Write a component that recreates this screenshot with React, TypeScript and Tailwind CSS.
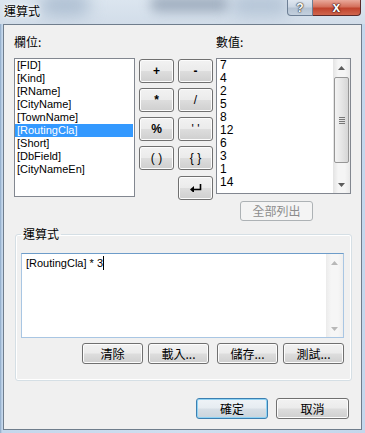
import React from "react";

const cjk = "font-['Noto_Sans_CJK_TC','Noto_Sans_CJK_SC',sans-serif]";
const latin = "font-['Liberation_Sans',Arial,sans-serif]";

const btnBase =
  "flex items-center justify-center rounded-[3px] border border-[#707070] bg-[linear-gradient(#f2f2f2_0%,#ebebeb_48%,#dddddd_52%,#cfcfcf_100%)] shadow-[inset_0_0_0_1px_#fcfcfc] text-black";

function Btn({ className, children }: { className: string; children: React.ReactNode }) {
  return <div className={`${btnBase} ${className}`}>{children}</div>;
}

function EnterIcon() {
  return (
    <svg width="12" height="8" viewBox="0 0 12 8">
      <path d="M10.5 0 V5.5 H3" stroke="#000" strokeWidth="1.6" fill="none" />
      <path d="M0 5.5 L4 2 V9 Z" fill="#000" />
    </svg>
  );
}

function Arrow({ up }: { up?: boolean }) {
  return (
    <svg width="7" height="4" viewBox="0 0 7 4">
      <path d={up ? "M0 4 L3.5 0 L7 4 Z" : "M0 0 L3.5 4 L7 0 Z"} fill="#5c5c5c" />
    </svg>
  );
}

const fields = ["[FID]", "[Kind]", "[RName]", "[CityName]", "[TownName]", "[RoutingCla]", "[Short]", "[DbField]", "[CityNameEn]"];
const values = ["7", "4", "2", "5", "8", "12", "6", "3", "1", "14"];

export default function App() {
  return (
    <div className="relative w-[365px] h-[433px] overflow-hidden bg-[linear-gradient(90deg,#8aa6c4_0px,#c4d7ec_2px,#cfdff0_50%,#c4d7ec_100%)]">
      {/* title bar */}
      <div className="relative h-[24px] flex items-start overflow-hidden bg-[linear-gradient(180deg,#dbe5ef,#d2dde9)]">
        <div className="absolute left-[40px] top-[-6px] w-[50px] h-[22px] rounded-full bg-[#aebfd2] blur-[8px]" />
        <div className="absolute left-[150px] top-[-4px] w-[80px] h-[16px] rounded-full bg-[#8797ab] blur-[6px] opacity-70" />
        <div className="absolute left-[230px] top-[-6px] w-[60px] h-[22px] rounded-full bg-[#b4c4d6] blur-[8px]" />
        <span className={`relative ml-[4px] mt-[3px] text-[12px] leading-[16px] text-black ${cjk} [text-shadow:0_0_6px_#fff,0_0_3px_#fff]`}>運算式</span>
        <div className="relative ml-auto mr-[4px] flex">
          <div className="w-[26px] h-[16px] rounded-bl-[4px] border border-t-0 border-[#6d7f95] bg-[linear-gradient(#dfe7f0_0%,#cbd6e3_45%,#b5c3d3_55%,#c3d0de_100%)] flex items-center justify-center">
            <span className={`text-[12px] leading-[12px] font-bold text-white ${latin} [text-shadow:0_0_1px_#333,0_0_1px_#333,0_0_2px_#333]`}>?</span>
          </div>
          <div className="w-[48px] h-[16px] rounded-br-[4px] border border-t-0 border-l-0 border-[#5a2a2a] bg-[linear-gradient(#e9a99b_0%,#d4705c_45%,#c0432d_55%,#d0664e_100%)] flex items-center justify-center">
            <span className={`text-[14px] leading-[13px] font-bold text-white ${latin} [text-shadow:0_0_1px_#3a1010,0_0_1px_#3a1010,0_0_2px_#3a1010]`}>x</span>
          </div>
        </div>
      </div>

      {/* client area */}
      <div className="ml-[3px] w-[359px] h-[406px] border border-[#6f7d8c] bg-[#f0f0f0] flex flex-col">
        {/* labels */}
        <div className={`flex mt-[9px] text-[12px] leading-[16px] text-black ${cjk}`}>
          <span className="ml-[10px] w-[202px]">欄位:</span>
          <span>數值:</span>
        </div>

        {/* top section */}
        <div className="flex mt-[8px] ml-[10px]">
          <div className={`w-[121px] h-[139px] border border-[#828790] bg-white ${latin} text-[11px] leading-[13px] text-black`}>
            {fields.map((f) => (
              <div
                key={f}
                className={`h-[13px] pl-[2px] ${f === "[RoutingCla]" ? "bg-[#3399ff] text-white mr-[1px]" : ""}`}
              >
                {f}
              </div>
            ))}
          </div>

          <div className={`ml-[4px] mt-[1px] flex flex-col gap-[5px] ${latin} text-[12px] font-bold`}>
            <Btn className="w-[35px] h-[24px]">+</Btn>
            <Btn className="w-[35px] h-[24px]">*</Btn>
            <Btn className="w-[35px] h-[24px]">%</Btn>
            <Btn className="w-[35px] h-[24px] font-normal">( )</Btn>
          </div>
          <div className={`ml-[4px] mt-[1px] flex flex-col gap-[5px] ${latin} text-[12px] font-bold`}>
            <Btn className="w-[35px] h-[24px]">-</Btn>
            <Btn className="w-[35px] h-[24px] font-normal">/</Btn>
            <Btn className="w-[35px] h-[24px] font-normal">' '</Btn>
            <Btn className="w-[35px] h-[24px] font-normal">{"{ }"}</Btn>
            <Btn className="w-[35px] h-[24px] mt-[1px]">
              <EnterIcon />
            </Btn>
          </div>

          <div className="ml-[3px] flex flex-col">
            <div className="w-[135px] h-[136px] border border-[#828790] bg-white flex">
              <div className={`flex-1 pl-[3px] ${latin} text-[12px] leading-[13px] text-black`}>
                {values.map((v) => (
                  <div key={v} className="h-[13px]">{v}</div>
                ))}
              </div>
              <div className="w-[17px] flex flex-col bg-[linear-gradient(90deg,#e3e3e3,#f5f5f5_30%,#f5f5f5_70%,#e9e9e9)]">
                <div className="h-[17px] flex items-center justify-center"><Arrow up /></div>
                <div className="mx-[1px] mt-[1px] h-[86px] rounded-[2px] border border-[#969696] bg-[linear-gradient(90deg,#f3f3f3,#e6e6e6_50%,#d6d6d6)] flex flex-col items-center justify-center gap-[1px]">
                  <div className="w-[6px] h-[1px] bg-[#777]" />
                  <div className="w-[6px] h-[1px] bg-[#777]" />
                  <div className="w-[6px] h-[1px] bg-[#777]" />
                  <div className="w-[6px] h-[1px] bg-[#777]" />
                </div>
                <div className="flex-1" />
                <div className="h-[17px] flex items-center justify-center"><Arrow /></div>
              </div>
            </div>
            <div className={`ml-[24px] mt-[7px] w-[73px] h-[20px] rounded-[3px] border border-[#adb2b5] bg-[#f4f4f4] flex items-center justify-center text-[12px] text-[#8d8d8d] ${cjk}`}>
              全部列出
            </div>
          </div>
        </div>

        {/* expression group */}
        <fieldset className="ml-[11px] mt-[5px] w-[337px] rounded-[3px] border border-[#d5dfe5] pb-[16px] shadow-[inset_0_0_0_1px_#fff]">
          <legend className={`ml-[5px] px-[2px] text-[12px] leading-[16px] text-black ${cjk}`}>運算式</legend>
          <div className="ml-[5px] mt-[11px] w-[323px] h-[85px] border border-[#a9c6e3] border-t-[#6d9cc9] bg-white flex">
            <div className={`flex-1 pl-[4px] pt-[2px] ${latin} text-[11px] leading-[14px] text-black flex items-start`}>
              <span>[RoutingCla] * 3</span>
              <span className="w-[1px] h-[14px] bg-black" />
            </div>
            <div className="w-[17px] flex flex-col justify-between bg-[linear-gradient(90deg,#ebebeb,#f6f6f6_30%,#f6f6f6_70%,#eeeeee)]">
              <div className="h-[17px] flex items-center justify-center opacity-40"><Arrow up /></div>
              <div className="h-[17px] flex items-center justify-center opacity-40"><Arrow /></div>
            </div>
          </div>
          <div className={`mt-[5px] flex text-[12px] ${cjk}`}>
            <Btn className="ml-[66px] w-[61px] h-[21px]">清除</Btn>
            <Btn className="ml-[5px] w-[61px] h-[21px]">載入...</Btn>
            <Btn className="ml-[8px] w-[61px] h-[21px]">儲存...</Btn>
            <Btn className="ml-[5px] w-[61px] h-[21px]">測試...</Btn>
          </div>
        </fieldset>

        {/* dialog buttons */}
        <div className={`mt-[17px] flex justify-end pr-[12px] gap-[8px] text-[12px] ${cjk}`}>
          <div className="w-[72px] h-[21px] rounded-[3px] border border-[#3c7fb1] bg-[linear-gradient(#eef3f7_0%,#e6ecf1_48%,#d7dfe6_52%,#cad4dc_100%)] shadow-[inset_0_0_0_1px_#8fd3f4] flex items-center justify-center text-black">
            確定
          </div>
          <Btn className="w-[73px] h-[21px]">取消</Btn>
        </div>
      </div>
    </div>
  );
}
